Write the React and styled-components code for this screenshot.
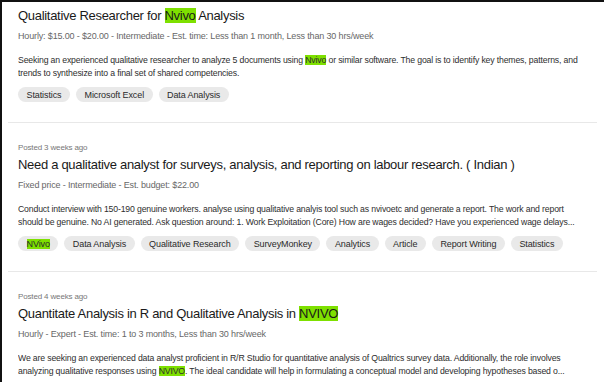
import styled, { createGlobalStyle } from 'styled-components';

const GlobalStyle = createGlobalStyle`
  html, body {
    margin: 0;
    padding: 0;
    background: #ffffff;
  }
  body {
    font-family: "Liberation Sans", Arial, sans-serif;
    color: #1f1f1f;
  }
`;

const jobs = [
  {
    id: 1,
    title: ['Qualitative Researcher for ', { hl: 'Nvivo' }, ' Analysis'],
    meta: 'Hourly: $15.00 - $20.00 - Intermediate - Est. time: Less than 1 month, Less than 30 hrs/week',
    description: [
      'Seeking an experienced qualitative researcher to analyze 5 documents using ',
      { hl: 'Nvivo' },
      ' or similar software. The goal is to identify key themes, patterns, and trends to synthesize into a final set of shared competencies.',
    ],
    tags: ['Statistics', 'Microsoft Excel', 'Data Analysis'],
  },
  {
    id: 2,
    posted: 'Posted 3 weeks ago',
    title: ['Need a qualitative analyst for surveys, analysis, and reporting on labour research. ( Indian )'],
    meta: 'Fixed price - Intermediate - Est. budget: $22.00',
    description: [
      'Conduct interview with 150-190 genuine workers. analyse using qualitative analyis tool such as nvivoetc and generate a report. The work and report should be genuine. No AI generated. Ask question around: 1. Work Exploitation (Core) How are wages decided? Have you experienced wage delays...',
    ],
    tags: [{ hl: 'NVivo' }, 'Data Analysis', 'Qualitative Research', 'SurveyMonkey', 'Analytics', 'Article', 'Report Writing', 'Statistics'],
  },
  {
    id: 3,
    posted: 'Posted 4 weeks ago',
    title: ['Quantitate Analysis in R and Qualitative Analysis in ', { hl: 'NVIVO' }],
    meta: 'Hourly - Expert - Est. time: 1 to 3 months, Less than 30 hrs/week',
    description: [
      'We are seeking an experienced data analyst proficient in R/R Studio for quantitative analysis of Qualtrics survey data. Additionally, the role involves analyzing qualitative responses using ',
      { hl: 'NVIVO' },
      '. The ideal candidate will help in formulating a conceptual model and developing hypotheses based o...',
    ],
    tags: [],
  },
];

const renderParts = (parts) =>
  parts.map((part, i) =>
    typeof part === 'string' ? part : <Highlight key={i}>{part.hl}</Highlight>
  );

const App = () => {
  return (
    <>
      <GlobalStyle />
      <Page>
        <JobList>
          {jobs.map((job, index) => (
            <JobItem key={job.id} $first={index === 0}>
              {job.posted && <Posted>{job.posted}</Posted>}
              <JobTitle $first={index === 0}>{renderParts(job.title)}</JobTitle>
              <Meta>{job.meta}</Meta>
              <Description>{renderParts(job.description)}</Description>
              {job.tags.length > 0 && (
                <Tags>
                  {job.tags.map((tag, i) => (
                    <Tag key={i}>{typeof tag === 'string' ? tag : <Highlight>{tag.hl}</Highlight>}</Tag>
                  ))}
                </Tags>
              )}
            </JobItem>
          ))}
        </JobList>
      </Page>
    </>
  );
};

const Page = styled.div`
  height: 382px;
  box-sizing: border-box;
  border-top: 2px solid #111;
  border-left: 2px solid #111;
  overflow: hidden;
  background: #fff;
`;

const JobList = styled.div`
  display: flex;
  flex-direction: column;
  padding: 0 7px 0 6px;
`;

const JobItem = styled.div`
  padding: ${props => (props.$first ? '4px' : '19px')} 10px 20px;
  border-bottom: 1px solid #e8e8e8;
`;

const Posted = styled.div`
  font-size: 8px;
  line-height: 12px;
  color: #777;
  letter-spacing: -0.15px;
`;

const JobTitle = styled.h2`
  margin: ${props => (props.$first ? '0' : '1px')} 0 0;
  font-size: 13px;
  line-height: 20px;
  font-weight: 400;
  letter-spacing: -0.3px;
  color: #1a1a1a;
`;

const Meta = styled.div`
  margin-top: 3px;
  font-size: 9px;
  line-height: 14px;
  color: #676767;
  letter-spacing: -0.15px;
`;

const Description = styled.p`
  margin: 11px 0 0;
  font-size: 8.7px;
  line-height: 12.5px;
  color: #2e2e2e;
  letter-spacing: -0.15px;
  display: -webkit-box;
  -webkit-line-clamp: 2;
  -webkit-box-orient: vertical;
  overflow: hidden;
`;

const Tags = styled.div`
  display: flex;
  flex-wrap: wrap;
  gap: 6px;
  margin-top: 8px;
`;

const Tag = styled.span`
  display: inline-flex;
  align-items: center;
  height: 15px;
  padding: 0 8.5px;
  border-radius: 999px;
  background: #e9e9e9;
  font-size: 9px;
  color: #2a2a2a;
  letter-spacing: -0.1px;
`;

const Highlight = styled.span`
  background: #7ee000;
`;

export default App;
